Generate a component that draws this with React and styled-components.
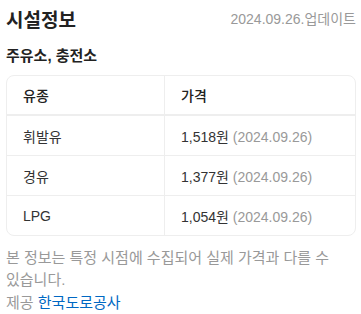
import React from 'react'
import styled, { createGlobalStyle } from 'styled-components';

const Global = createGlobalStyle`
body {
  margin: 0;
  background: #fff;
  font-family: "Liberation Sans", "Noto Sans CJK KR", sans-serif;
  color: #222;
}
`;

const Container = styled.div`
width: 361px;
padding: 4px 5px 0 6px;
box-sizing: border-box;
`;
const Header = styled.div`
display: flex;
justify-content: space-between;
align-items: center;
height: 28px;
`;
const Title = styled.h2`
margin: 0;
font-size: 19px;
font-weight: 700;
color: #222;
`;
const Updated = styled.span`
font-size: 14px;
color: #999;
`;
const SubTitle = styled.h3`
margin: 12px 0 10px;
font-size: 15px;
font-weight: 700;
color: #222;
`;
const Table = styled.table`
width: 100%;
border-collapse: separate;
border-spacing: 0;
border: 1px solid #eee;
border-radius: 8px;
font-size: 14px;
color: #333;
`;
const Cell = styled.td`
height: 39px;
padding: 0 16px;
text-align: left;
border-top: ${p => (p.$first ? 'none' : '1px solid #eee')};
border-left: ${p => (p.$right ? '1px solid #eee' : 'none')};
width: ${p => (p.$right ? 'auto' : '125px')};
`;
const HeadCell = styled.th`
height: 38px;
padding: 0 16px;
text-align: left;
font-weight: 500;
color: #222;
border-bottom: 2px solid #eee;
border-left: ${p => (p.$right ? '1px solid #eee' : 'none')};
`;
const Date = styled.span`
color: #999;
`;
const Note = styled.p`
margin: 11px 0 0;
font-size: 15px;
line-height: 22px;
color: #999;
word-break: keep-all;
`;
const Source = styled.p`
margin: 1px 0 0;
font-size: 15px;
line-height: 22px;
color: #999;
`;
const Link = styled.a`
color: #0068c3;
text-decoration: none;
`;

const rows = [
  { name: '휘발유', price: '1,518원', date: '(2024.09.26)' },
  { name: '경유', price: '1,377원', date: '(2024.09.26)' },
  { name: 'LPG', price: '1,054원', date: '(2024.09.26)' },
];

const App = () => {
  return (
    <Container>
      <Global />
      <Header>
        <Title>시설정보</Title>
        <Updated>2024.09.26.업데이트</Updated>
      </Header>
      <SubTitle>주유소, 충전소</SubTitle>
      <Table>
        <thead>
          <tr>
            <HeadCell>유종</HeadCell>
            <HeadCell $right>가격</HeadCell>
          </tr>
        </thead>
        <tbody>
          {rows.map((r, i) => (
            <tr key={r.name}>
              <Cell $first={i === 0}>{r.name}</Cell>
              <Cell $first={i === 0} $right>{r.price} <Date>{r.date}</Date></Cell>
            </tr>
          ))}
        </tbody>
      </Table>
      <Note>본 정보는 특정 시점에 수집되어 실제 가격과 다를 수 있습니다.</Note>
      <Source>제공 <Link>한국도로공사</Link></Source>
    </Container>
  )
}

export default App
